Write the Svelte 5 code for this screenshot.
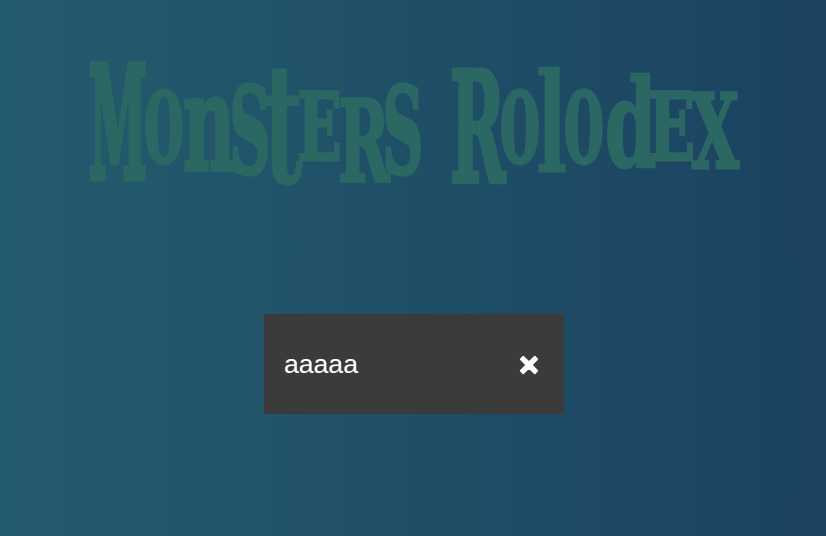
<script>
  const ink = '#2b6763';
  // Each letter of the heading fills its own box: left, right, top, bottom, extra weight.
  const words = [
    [
      ['M', 90, 146, 61, 182, 9], ['o', 145, 183, 87.5, 165.5, 2], ['n', 184, 235, 97, 172, 5],
      ['S', 232, 268, 83, 177, 6], ['t', 265, 303, 69, 186, 1], ['E', 299, 340, 89, 161, 6],
      ['R', 340, 391, 97, 183, 6], ['S', 385, 421, 83, 177, 6]
    ],
    [
      ['R', 452, 507, 67, 184, 6], ['o', 501, 539, 87.5, 165.5, 2], ['l', 538, 566, 67, 173, 1],
      ['o', 565, 603, 87.5, 165.5, 2], ['d', 607, 656, 74, 171, 4], ['E', 650, 693, 89, 161, 6],
      ['X', 690, 740, 92, 170, 6]
    ]
  ];
  const pen = document.createElement('canvas').getContext('2d');
  pen.font = 'bold 200px "DejaVu Serif"';
  // The weight is a stroke in glyph units, so it scales along with the letter.
  function fit([ch, x0, x1, y0, y1, weight]) {
    const m = pen.measureText(ch);
    const sx = (x1 - x0) / (m.actualBoundingBoxLeft + m.actualBoundingBoxRight + weight);
    const sy = (y1 - y0) / (m.actualBoundingBoxAscent + m.actualBoundingBoxDescent + weight);
    const tx = x0 + (m.actualBoundingBoxLeft + weight / 2) * sx;
    const ty = y0 + (m.actualBoundingBoxAscent + weight / 2) * sy;
    return { ch, weight, transform: `translate(${tx} ${ty}) scale(${sx} ${sy})` };
  }
  const fitted = words.map((w) => w.map(fit));
  let query = $state('aaaaa');
</script>

<main>
  <h1>
    <svg class="title" viewBox="0 0 826 214" width="826" height="214" aria-label="Monsters Rolodex">
      {#each fitted as word}
        <g fill={ink} stroke={ink}>
          {#each word as l}<text transform={l.transform} stroke-width={l.weight}>{l.ch}</text>{/each}
        </g>
      {/each}
    </svg>
  </h1>
  <label class="search">
    <input bind:value={query} aria-label="search monsters" />
    <button aria-label="clear" onclick={() => (query = '')}>
      <svg viewBox="0 0 20 20" width="20" height="20">
        <path
          d="M4.2 1.6 10 7.2 15.8 1.6 18.4 4.2 12.8 10 18.4 15.8 15.8 18.4 10 12.8 4.2 18.4 1.6 15.8 7.2 10 1.6 4.2Z"
          fill="#fff" stroke="#fff" stroke-width="1.6" stroke-linejoin="round"
        />
      </svg>
    </button>
  </label>
</main>

<style>
  :global(body) { margin: 0; }
  main {
    box-sizing: border-box;
    width: 826px;
    height: 536px;
    overflow: hidden;
    display: flex;
    flex-direction: column;
    align-items: center;
    background: linear-gradient(to right, #255b6e 0%, #1f4f67 50%, #1b4261 100%);
  }
  h1 { margin: 0; height: 214px; }
  .title { display: block; overflow: visible; font: bold 200px "DejaVu Serif", serif; }
  .title text { stroke-linejoin: miter; }
  .search {
    box-sizing: border-box;
    margin: 100px 0 0 2px;
    width: 300px;
    height: 99.5px;
    padding: 0 25.5px 0 20px;
    display: flex;
    align-items: center;
    justify-content: space-between;
    background: #3b3b3b;
  }
  input {
    width: 200px;
    padding: 2px 0 0;
    border: 0;
    outline: 0;
    background: none;
    color: #fff;
    font: 26.6px "Liberation Sans", Arial, sans-serif;
  }
  button { padding: 0; border: 0; background: none; display: flex; margin-top: 3px; }
</style>
